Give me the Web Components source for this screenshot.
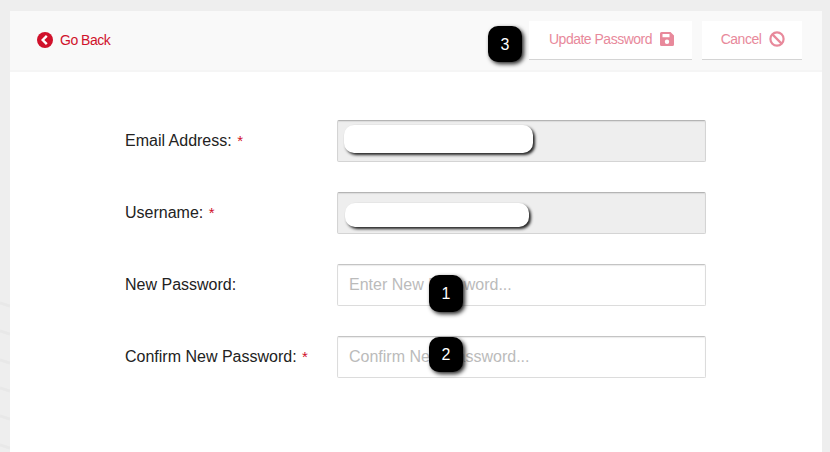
<!DOCTYPE html>
<html>
<head>
<meta charset="utf-8">
<title>Update Password</title>
<style>
  html, body { margin: 0; height: 100%; overflow: hidden; }
  body { background: #eeeeee; font-family: "Liberation Sans", sans-serif; color: #222; }
</style>
</head>
<body>
<template id="page-tpl">
  <style>
    :host { display: block; position: relative; height: 452px; box-sizing: border-box; padding: 11px 8px 0 10px; }
    .streaks { position: absolute; left: 0; top: 0; }
    .panel { position: relative; height: 441px; background: #fff; }
  </style>
  <svg class="streaks" width="10" height="452" fill="none" stroke="#e8e8e8" stroke-width="3">
    <path d="M0 303l10 3M0 331l10 3M0 360l10 3M0 388l10 3M0 416l10 3M0 445l10 3"/>
  </svg>
  <div class="panel"><slot></slot></div>
</template>

<template id="toolbar-tpl">
  <style>
    :host { display: flex; align-items: flex-start; box-sizing: border-box; height: 61px; padding: 10px 20px 0 27px; background: #f9f9f9; border-bottom: 2px solid #f5f5f5; }
    .left { flex: 1; display: flex; height: 36px; padding-top: 1px; align-items: center; }
    .right { display: flex; gap: 10px; }
  </style>
  <div class="left"><slot name="left"></slot></div>
  <div class="right"><slot></slot></div>
</template>

<template id="back-tpl">
  <style>
    :host { display: inline-flex; align-items: center; gap: 7px; color: #d0112b; font-size: 14px; letter-spacing: -.5px; line-height: 16px; }
    svg { display: block; }
  </style>
  <svg width="16" height="16" viewBox="0 0 16 16"><circle cx="8" cy="8" r="8" fill="#d0112b"/><path d="M9.8 3.9L5.7 8l4.1 4.1" fill="none" stroke="#fff" stroke-width="2.4"/></svg>
  <span><slot></slot></span>
</template>

<template id="button-tpl">
  <style>
    :host { display: flex; align-items: center; justify-content: center; gap: 8px; box-sizing: border-box; height: 39px; padding: 0 0 2px 2px; background: #fff; border-bottom: 1px solid #d4d4d4; color: #e8899b; font-size: 14px; letter-spacing: -.5px; }
    ::slotted(svg) { display: block; }
  </style>
  <slot></slot><slot name="icon"></slot>
</template>

<template id="form-tpl">
  <style>
    :host { display: flex; flex-direction: column; gap: 30px; padding: 48px 0 0 115px; }
  </style>
  <slot></slot>
</template>

<template id="field-tpl">
  <style>
    :host { display: grid; grid-template-columns: 212px 369px; align-items: center; height: 42px; position: relative; font-size: 16px; color: #222; }
    .req { display: none; color: #d0112b; margin-left: 1px; font-size: 15px; }
    :host([required]) .req { display: inline; }
    .box { box-sizing: border-box; height: 42px; border: 1px solid #dcdcdc; border-top-color: #c4c4c4; border-radius: 2px; padding: 0 11px; display: flex; align-items: center; color: #bbb; font-size: 16px; background: #fff; box-shadow: inset 0 1px 1px rgba(0,0,0,.08); }
    :host([disabled]) .box { background: #eeeeee; border-color: #d4d4d4; border-top-color: #b4b4b4; }
  </style>
  <div class="label"><slot name="label"></slot> <span class="req">*</span></div>
  <div class="box"><slot></slot></div>
  <slot name="over"></slot>
</template>

<template id="redact-tpl">
  <style>
    :host { display: block; position: absolute; background: #fff; border-radius: 10px; box-shadow: 2px 2px 3px #222; }
  </style>
</template>

<template id="badge-tpl">
  <style>
    :host { display: flex; align-items: center; justify-content: center; position: absolute; width: 34px; height: 36px; background: #000; color: #fff; border-radius: 10px; box-shadow: 2px 2px 4px #222; font-size: 16px; }
  </style>
  <slot></slot>
</template>

<x-page>
  <x-toolbar>
    <x-back slot="left">Go Back</x-back>
    <x-button style="width:163px">Update Password
      <svg slot="icon" width="14" height="14" viewBox="0 0 14 14"><path fill="#e8899b" fill-rule="evenodd" d="M1.5 0H10.5L14 3.5V12.5A1.5 1.5 0 0 1 12.5 14H1.5A1.5 1.5 0 0 1 0 12.5V1.5A1.5 1.5 0 0 1 1.5 0ZM2.5 2V5.2H9.5V2ZM7 7.6A2.2 2.2 0 1 0 7 12 2.2 2.2 0 1 0 7 7.6Z"/></svg>
    </x-button>
    <x-button style="width:100px">Cancel
      <svg slot="icon" width="16" height="16" viewBox="0 0 16 16" fill="none" stroke="#e8899b" stroke-width="2.2"><circle cx="8" cy="8" r="6.6"/><path d="M3.4 3.4l9.2 9.2"/></svg>
    </x-button>
  </x-toolbar>
  <x-badge style="left:478px;top:15px;padding-top:1px;height:35px">3</x-badge>
  <x-form>
    <x-field required disabled>
      <span slot="label">Email Address:</span>
      <x-redact slot="over" style="left:219px;top:5px;width:189px;height:28px"></x-redact>
    </x-field>
    <x-field required disabled>
      <span slot="label">Username:</span>
      <x-redact slot="over" style="left:220px;top:11px;width:184px;height:24px"></x-redact>
    </x-field>
    <x-field>
      <span slot="label">New Password:</span>
      Enter New Password...
      <x-badge slot="over" style="left:304px;top:11px;height:37px">1</x-badge>
    </x-field>
    <x-field required>
      <span slot="label">Confirm New Password:</span>
      Confirm New Password...
      <x-badge slot="over" style="left:304px;top:1px;height:34px;padding-top:1px">2</x-badge>
    </x-field>
  </x-form>
</x-page>

<script>
  // every element is just its template in an open shadow root
  const elements = {
    'x-page': 'page-tpl',
    'x-toolbar': 'toolbar-tpl',
    'x-back': 'back-tpl',
    'x-button': 'button-tpl',
    'x-form': 'form-tpl',
    'x-field': 'field-tpl',
    'x-redact': 'redact-tpl',
    'x-badge': 'badge-tpl',
  };
  Object.entries(elements).forEach(([name, tpl]) => {
    customElements.define(name, class extends HTMLElement {
      constructor() {
        super();
        this.attachShadow({ mode: 'open' })
          .appendChild(document.getElementById(tpl).content.cloneNode(true));
      }
    });
  });
</script>
</body>
</html>
